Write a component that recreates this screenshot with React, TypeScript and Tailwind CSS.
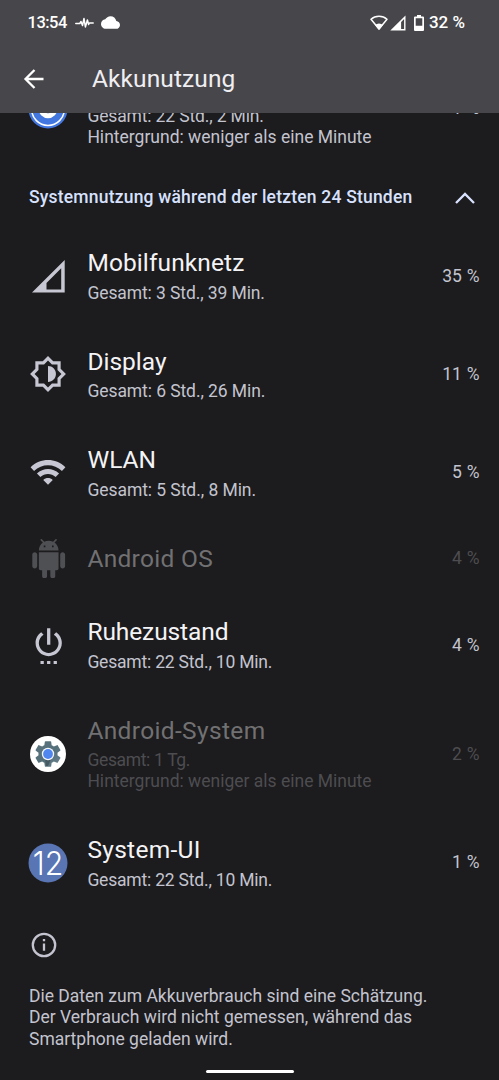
import React from 'react';

interface UsageItem {
  name?: string;
  lines: { text: string; tracking: string }[];
  percent: string;
  icon: React.ReactNode;
  height: string;
  tracking: string;
  disabled?: boolean;
}

const GEAR =
  'M19.43 12.98c.04-.32.07-.64.07-.98s-.03-.66-.07-.98l2.11-1.65c.19-.15.24-.42.12-.64l-2-3.46c-.12-.22-.39-.3-.61-.22l-2.49 1c-.52-.4-1.08-.73-1.69-.98l-.38-2.65C14.46 2.18 14.25 2 14 2h-4c-.25 0-.46.18-.49.42l-.38 2.65c-.61.25-1.17.59-1.69.98l-2.49-1c-.23-.09-.49 0-.61.22l-2 3.46c-.13.22-.07.49.12.64l2.11 1.65c-.04.32-.07.65-.07.98s.03.66.07.98l-2.11 1.65c-.19.15-.24.42-.12.64l2 3.46c.12.22.39.3.61.22l2.49-1c.52.4 1.08.73 1.69.98l.38 2.65c.03.24.24.42.49.42h4c.25 0 .46-.18.49-.42l.38-2.65c.61-.25 1.17-.59 1.69-.98l2.49 1c.23.09.49 0 .61-.22l2-3.46c.12-.22.07-.49-.12-.64l-2.11-1.65z';

const CellularIcon = () => (
  <svg className="h-10 w-10 text-[#c6c7d2]" viewBox="0 0 40 40" fill="currentColor">
    <path fillRule="evenodd" d="M36.700 4v32.400H4zM33.200 12.200 18.500 26.900v6.600h14.700z" />
  </svg>
);

const BrightnessIcon = () => (
  <svg className="h-[38px] w-[38px] text-[#c6c7d2]" viewBox="0 0 24 24" fill="currentColor">
    <path d="M20 8.69V4h-4.69L12 .69 8.69 4H4v4.69L.69 12 4 15.31V20h4.69L12 23.31 15.31 20H20v-4.69L23.31 12 20 8.69zm-2 5.79V18h-3.52L12 20.48 9.52 18H6v-3.52L3.52 12 6 9.52V6h3.52L12 3.52 14.48 6H18v3.52L20.48 12 18 14.48z" />
    <path d="M12 7v10c2.76 0 5-2.24 5-5s-2.24-5-5-5z" />
  </svg>
);

const WifiIcon = () => (
  <svg className="h-[38px] w-[38px] text-[#c6c7d2]" viewBox="0 0 24 24" fill="currentColor">
    <path d="M1 9l2.200 2.300c4.900-4.800 12.700-4.800 17.600 0L23 9C16.930 2.930 7.080 2.930 1 9zm8 8l3 3 3-3c-1.650-1.660-4.340-1.660-6 0zm-4-4l2.200 2.200c2.650-2.600 6.950-2.600 9.600 0L19 13C15.140 9.140 8.870 9.140 5 13z" />
  </svg>
);

const AndroidIcon = () => (
  <svg className="h-[39.4px] w-[39.4px] text-[#4f5054]" viewBox="0 0 24 24" fill="currentColor">
    <path d="M6 18c0 .55.45 1 1 1h1v3.5c0 .83.67 1.5 1.5 1.5s1.5-.67 1.5-1.5V19h2v3.5c0 .83.67 1.5 1.5 1.5s1.5-.67 1.5-1.5V19h1c.55 0 1-.45 1-1V8H6v10zM3.5 8C2.67 8 2 8.67 2 9.5v7c0 .83.67 1.5 1.5 1.5S5 17.33 5 16.5v-7C5 8.67 4.33 8 3.5 8zm17 0c-.83 0-1.5.67-1.5 1.5v7c0 .83.67 1.5 1.5 1.5s1.5-.67 1.5-1.5v-7c0-.83-.67-1.5-1.5-1.5zm-4.97-5.84l1.3-1.3c.2-.2.2-.51 0-.71-.2-.2-.51-.2-.71 0l-1.48 1.48C13.85 1.23 12.95 1 12 1c-.96 0-1.86.23-2.66.63L7.85.15c-.2-.2-.51-.2-.71 0-.2.2-.2.51 0 .71l1.31 1.31C6.97 3.26 6 5.01 6 7h12c0-1.99-.97-3.75-2.47-4.84zM10 5H9V4h1v1zm5 0h-1V4h1v1z" />
  </svg>
);

const PowerIcon = () => (
  <svg className="h-[39.4px] w-[39.4px] text-[#c6c7d2]" viewBox="0 0 24 24" fill="currentColor">
    <path d="M7 24h2v-2H7v2zm4 0h2v-2h-2v2zm2-22h-2v10h2V2zm3.56 2.44l-1.45 1.45C16.84 6.94 18 8.83 18 11c0 3.31-2.69 6-6 6s-6-2.69-6-6c0-2.17 1.16-4.06 2.88-5.12L7.44 4.44C5.36 5.88 4 8.28 4 11c0 4.42 3.58 8 8 8s8-3.58 8-8c0-2.72-1.36-5.12-3.44-6.56zM15 24h2v-2h-2v2z" />
  </svg>
);

const SettingsIcon = () => (
  <svg className="h-10 w-10" viewBox="0 0 40 40">
    <defs>
      <linearGradient id="gear" x1="0" y1="0" x2="1" y2="1">
        <stop offset="0" stopColor="#5c737d" />
        <stop offset="0.55" stopColor="#54707b" />
        <stop offset="1" stopColor="#6b858f" />
      </linearGradient>
    </defs>
    <circle cx="20" cy="20" r="18" fill="#fff" />
    <path d={GEAR} fill="url(#gear)" transform="translate(4.7 4.7) scale(1.275)" />
    <path d="M17 25h6l-1.500 3.500-1.500 3.500h-2z" fill="#465a63" />
    <circle cx="20" cy="20" r="6.2" fill="#f4f7fb" />
    <circle cx="20" cy="20" r="4.9" fill="#4f86f0" />
  </svg>
);

const TwelveIcon = () => (
  <svg className="h-10 w-10" viewBox="0 0 40 40">
    <circle cx="20" cy="20" r="19.5" fill="#5975b3" />
    <text x="4.800" y="31.800" fill="#fff" fontFamily="Inter" fontWeight="300" fontSize="33" textLength="30.500" lengthAdjust="spacingAndGlyphs">
      12
    </text>
  </svg>
);

const ServicesIcon = () => (
  <svg className="h-10 w-10" viewBox="0 0 40 40" fill="none">
    <circle cx="20" cy="20" r="19.5" fill="#4377e0" />
    <circle cx="20" cy="20" r="16.4" stroke="#fff" strokeWidth="1.5" />
    <circle cx="20" cy="20" r="6.8" stroke="#fff" strokeWidth="5" />
  </svg>
);

const items: UsageItem[] = [
  {
    lines: [
      { text: 'Gesamt: 22 Std., 2 Min.', tracking: 'tracking-[-0.15px]' },
      { text: 'Hintergrund: weniger als eine Minute', tracking: 'tracking-normal' },
    ],
    percent: '1 %',
    icon: <ServicesIcon />,
    height: 'h-[119.6px]',
    tracking: 'tracking-normal',
  },
];

const systemItems: UsageItem[] = [
  {
    name: 'Mobilfunknetz',
    lines: [{ text: 'Gesamt: 3 Std., 39 Min.', tracking: 'tracking-[-0.1px]' }],
    percent: '35 %',
    icon: <CellularIcon />,
    height: 'h-[98.3px]',
    tracking: 'tracking-[0.1px]',
  },
  {
    name: 'Display',
    lines: [{ text: 'Gesamt: 6 Std., 26 Min.', tracking: 'tracking-[-0.08px]' }],
    percent: '11 %',
    icon: <BrightnessIcon />,
    height: 'h-[98.3px]',
    tracking: 'tracking-normal',
  },
  {
    name: 'WLAN',
    lines: [{ text: 'Gesamt: 5 Std., 8 Min.', tracking: 'tracking-[-0.06px]' }],
    percent: '5 %',
    icon: <WifiIcon />,
    height: 'h-[98.3px]',
    tracking: 'tracking-normal',
  },
  {
    name: 'Android OS',
    lines: [],
    percent: '4 %',
    icon: <AndroidIcon />,
    height: 'h-[74px]',
    tracking: 'tracking-[0.3px]',
    disabled: true,
  },
  {
    name: 'Ruhezustand',
    lines: [{ text: 'Gesamt: 22 Std., 10 Min.', tracking: 'tracking-[-0.2px]' }],
    percent: '4 %',
    icon: <PowerIcon />,
    height: 'h-[98.3px]',
    tracking: 'tracking-[-0.1px]',
  },
  {
    name: 'Android-System',
    lines: [
      { text: 'Gesamt: 1 Tg.', tracking: 'tracking-[-0.35px]' },
      { text: 'Hintergrund: weniger als eine Minute', tracking: 'tracking-normal' },
    ],
    percent: '2 %',
    icon: <SettingsIcon />,
    height: 'h-[119.6px]',
    tracking: 'tracking-[0.35px]',
    disabled: true,
  },
  {
    name: 'System-UI',
    lines: [{ text: 'Gesamt: 22 Std., 10 Min.', tracking: 'tracking-[-0.2px]' }],
    percent: '1 %',
    icon: <TwelveIcon />,
    height: 'h-[98.3px]',
    tracking: 'tracking-[0.3px]',
  },
];

const UsageRow: React.FC<{ item: UsageItem }> = ({ item }) => (
  <div className={`flex items-center pr-[19.5px] pl-[28.4px] ${item.height}`}>
    <div className="flex w-10 shrink-0 items-center justify-center">{item.icon}</div>
    <div className="ml-[19px] min-w-0 flex-1 whitespace-nowrap">
      {item.name ? (
        <p className={`text-[24.5px] leading-8 ${item.lines.length ? 'mb-[3.5px]' : ''} ${item.tracking} ${item.disabled ? 'text-[#717173]' : 'text-[#f4f3f6]'}`}>{item.name}</p>
      ) : (
        <div className="h-[37px]" />
      )}
      {item.lines.map((line) => (
        <p key={line.text} className={`text-[17.5px] leading-[21.3px] ${line.tracking} ${item.disabled ? 'text-[#4d4d51]' : 'text-[#c3c4cf]'}`}>
          {line.text}
        </p>
      ))}
    </div>
    <span className={`text-[17.5px] [word-spacing:0.5px] ${item.disabled ? 'text-[#4d4d51]' : 'text-[#c3c4cf]'}`}>{item.percent}</span>
  </div>
);

const StatusBar = () => (
  <div className="flex h-[45px] items-center pr-[34px] pl-[27.5px] font-medium text-white">
    <span className="w-[40px] pt-0.5 text-[16.5px] tracking-[-0.5px]">13:54</span>
    <svg className="ml-[7px] h-[18px] w-[19px]" viewBox="0 0 19 18" fill="none" stroke="#fff" strokeWidth="1.5" strokeLinejoin="round" strokeLinecap="round">
      <path d="M.8 9.5h4l1.200-2 1.500 4L9 4.500l1.400 8.500 2-7 1.200 4.500.8-1.500h3.800" />
    </svg>
    <svg className="ml-[7px] h-[19px] w-[19px]" viewBox="0 0 24 24" fill="#fff">
      <path d="M19.35 10.04C18.67 6.59 15.64 4 12 4 9.11 4 6.6 5.64 5.35 8.04 2.34 8.36 0 10.91 0 14c0 3.31 2.69 6 6 6h13c2.76 0 5-2.24 5-5 0-2.64-2.05-4.78-4.65-4.96z" />
    </svg>
    <div className="ml-auto flex items-center">
      <svg className="h-4 w-[18px]" viewBox="0 0 18 16">
        <path d="M9 1.200c3.100 0 5.900 1.100 8 3L9 14 1 4.200c2.100-1.900 4.900-3 8-3z" fill="none" stroke="#fff" strokeWidth="1.500" strokeLinejoin="round" />
        <path d="M9 15 5 10a6 6 0 0 1 8 0z" fill="#fff" />
      </svg>
      <svg className="ml-[2px] h-4 w-4" viewBox="0 0 16 16" fill="#fff">
        <path fillRule="evenodd" d="M15.500.5v15H.3zM14.100 4v10h-3V7z" />
      </svg>
      <svg className="ml-2 h-4 w-[10px]" viewBox="0 0 10 16" fill="#fff">
        <path fillRule="evenodd" d="M3 0h4v1.500h2a1 1 0 0 1 1 1V15a1 1 0 0 1-1 1H1a1 1 0 0 1-1-1V2.500a1 1 0 0 1 1-1h2zM1.700 3.200v7.600h6.600V3.200z" />
      </svg>
      <span className="ml-[5px] text-[17px]">32 %</span>
    </div>
  </div>
);

export default function App() {
  return (
    <div className="flex h-[1080px] w-[499px] flex-col overflow-hidden bg-[#1c1b1d] font-['Roboto',sans-serif]">
      <header className="z-10 h-[112.6px] shrink-0 bg-[#47464a]">
        <StatusBar />
        <div className="flex h-[67px] items-center pl-[22px]">
          <svg className="h-6 w-6" viewBox="0 0 24 24" fill="none" stroke="#fff" strokeWidth="2.300">
            <path d="M21.500 12H4M12.500 3 3.500 12l9 9" />
          </svg>
          <h1 className="ml-[46px] pt-0.5 text-[24.5px] tracking-[0.1px] text-[#efeef2]">Akkunutzung</h1>
        </div>
      </header>

      <main className="min-h-0 flex-1 overflow-hidden">
        <div className="mt-[-63.8px]">
          {items.map((item, i) => (
            <UsageRow key={i} item={item} />
          ))}

          <div className="flex h-[58.3px] items-center justify-between pr-6 pl-[29px] text-[#d8e2ff]">
            <h2 className="text-[17.5px] font-medium tracking-[0.2px] whitespace-nowrap">Systemnutzung während der letzten 24 Stunden</h2>
            <svg className="h-5 w-5" viewBox="0 0 20 20" fill="none" stroke="currentColor" strokeWidth="2.300">
              <path d="m1 15 9-9 9 9" />
            </svg>
          </div>

          {systemItems.map((item) => (
            <UsageRow key={item.name} item={item} />
          ))}

          <div className="pt-[20px] pl-[29px] text-[#c3c4cf]">
            <svg className="ml-[1.500px] h-[26px] w-[26px]" viewBox="0 0 26 26" fill="none" stroke="currentColor" strokeWidth="2.300">
              <circle cx="13" cy="13" r="11.200" />
              <path d="M13 11.500v7.200M13 7v2.300" />
            </svg>
            <p className="mt-[28.500px] text-[17.5px] leading-[21.200px] whitespace-nowrap">
              Die Daten zum Akkuverbrauch sind eine Schätzung.
              <br />
              Der Verbrauch wird nicht gemessen, während das
              <br />
              Smartphone geladen wird.
            </p>
          </div>
        </div>
      </main>

      <div className="flex h-[10px] shrink-0 justify-center">
        <div className="h-[3px] w-[88px] rounded-full bg-white" />
      </div>
    </div>
  );
}
